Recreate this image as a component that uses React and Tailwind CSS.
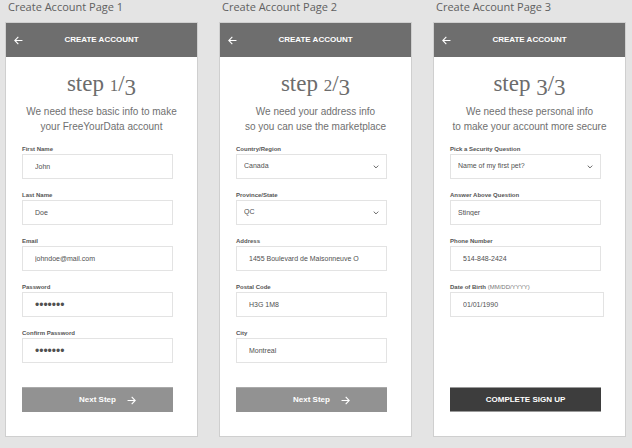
import { useId } from "react";

function Arrow({ back = false }) {
  return (
    <svg viewBox="0 0 10 10" className="h-[9px] w-[9px]" fill="none" stroke="currentColor" strokeWidth="1.2" aria-hidden="true">
      {back ? <path d="M9.4 5H1M4.8 1 .9 5l3.9 4" /> : <path d="M.6 5H9M5.2 1 9.1 5 5.2 9" />}
    </svg>
  );
}

function Field({ label, hint, value, type = "text", flush = false, wide = false }) {
  const id = useId();
  const box = "block h-[25px] w-full appearance-none rounded-none border border-[#e3e3e3] bg-white text-[#505050] outline-none";
  const size = type === "password" ? "text-[12px]" : "text-[7px]";
  return (
    <div className={wide ? "-mr-[3px]" : ""}>
      <label htmlFor={id} className="mb-px block h-2 text-[6px] leading-[8px] font-bold text-[#555]">
        {label}
        {hint && <span className="font-normal text-[#777]"> {hint}</span>}
      </label>
      {type === "select" ? (
        <div className="relative">
          <select id={id} defaultValue={value} className={`${box} ${size} px-[7px]`}>
            <option>{value}</option>
          </select>
          <svg viewBox="0 0 6 4" className="pointer-events-none absolute top-1/2 right-2 h-1 w-1.5 -translate-y-1/2" fill="none" stroke="#666" strokeWidth="1" aria-hidden="true">
            <path d="m.7.6 2.3 2.3L5.3.6" />
          </svg>
        </div>
      ) : (
        <input id={id} type={type} defaultValue={value} className={`${box} ${size} ${flush ? "px-[7px]" : "px-3"}`} />
      )}
    </div>
  );
}

/* Old-style figures: 1 and 2 sit at x-height, 3 descends below the baseline. */
function Figure({ n }) {
  return <span className={n === 3 ? "align-[-4px]" : "text-[17px]"}>{n}</span>;
}

function Page({ step, lines, fields, children }) {
  return (
    <section className="flex flex-col">
      <h1 className="mb-[7px] h-[15px] pl-[3px] font-['Open_Sans','Noto_Sans',sans-serif] text-[11px] leading-[14px] text-[#606060]">
        Create Account Page {step}
      </h1>
      <form className="flex grow flex-col border border-[#cfcfcf] bg-white" onSubmit={(e) => e.preventDefault()}>
        <header className="grid h-[34px] grid-cols-[24px_1fr_24px] items-center bg-[#6e6e6e] text-white">
          <button type="button" aria-label="Back" className="flex justify-center">
            <Arrow back />
          </button>
          <span className="text-center text-[8px] font-bold">CREATE ACCOUNT</span>
        </header>
        <h2 className="mt-[14px] h-7 text-center font-[Georgia,'Liberation_Serif',serif] text-[23px] leading-[26px] text-[#6c6c6c]">
          step <Figure n={step} />/<Figure n={3} />
        </h2>
        <p className="mt-[5px] text-center text-[10px] leading-[15px] whitespace-nowrap text-[#707070]">
          {lines[0]}
          <br />
          {lines[1]}
        </p>
        <div className="mt-[11px] flex flex-col gap-3 pr-6 pl-4">
          {fields.map((f) => (
            <Field key={f.label} {...f} />
          ))}
        </div>
        <div className="mt-auto pt-6 pr-6 pb-6 pl-4">{children}</div>
      </form>
    </section>
  );
}

function NextButton() {
  return (
    <button type="submit" className="grid h-[25px] w-full grid-cols-[1fr_auto_1fr] items-center border-t border-[#aaa] bg-[#929292] text-[8px] font-bold text-white">
      <span className="col-start-2">Next Step</span>
      <span className="pl-[11px]">
        <Arrow />
      </span>
    </button>
  );
}

export default function App() {
  return (
    <main className="grid min-h-screen grid-cols-3 gap-[21px] bg-[#e4e4e4] pr-1.5 pb-[11px] pl-[5px] font-['Liberation_Sans',Arial,sans-serif]">
      <Page
        step={1}
        lines={["We need these basic info to make", "your FreeYourData account"]}
        fields={[
          { label: "First Name", value: "John" },
          { label: "Last Name", value: "Doe" },
          { label: "Email", value: "johndoe@mail.com", type: "email" },
          { label: "Password", value: "example", type: "password" },
          { label: "Confirm Password", value: "example", type: "password" },
        ]}
      >
        <NextButton />
      </Page>
      <Page
        step={2}
        lines={["We need your address info", "so you can use the marketplace"]}
        fields={[
          { label: "Country/Region", value: "Canada", type: "select" },
          { label: "Province/State", value: "QC", type: "select" },
          { label: "Address", value: "1455 Boulevard de Maisonneuve O" },
          { label: "Postal Code", value: "H3G 1M8" },
          { label: "City", value: "Montreal" },
        ]}
      >
        <NextButton />
      </Page>
      <Page
        step={3}
        lines={["We need these personal info", "to make your account more secure"]}
        fields={[
          { label: "Pick a Security Question", value: "Name of my first pet?", type: "select" },
          { label: "Answer Above Question", value: "Stinger", flush: true },
          { label: "Phone Number", value: "514-848-2424", type: "tel" },
          { label: "Date of Birth", hint: "(MM/DD/YYYY)", value: "01/01/1990", wide: true },
        ]}
      >
        <button type="submit" className="block h-[25px] w-full border-y border-[#999] bg-[#3d3d3d] text-[8px] font-bold text-white">
          COMPLETE SIGN UP
        </button>
      </Page>
    </main>
  );
}
